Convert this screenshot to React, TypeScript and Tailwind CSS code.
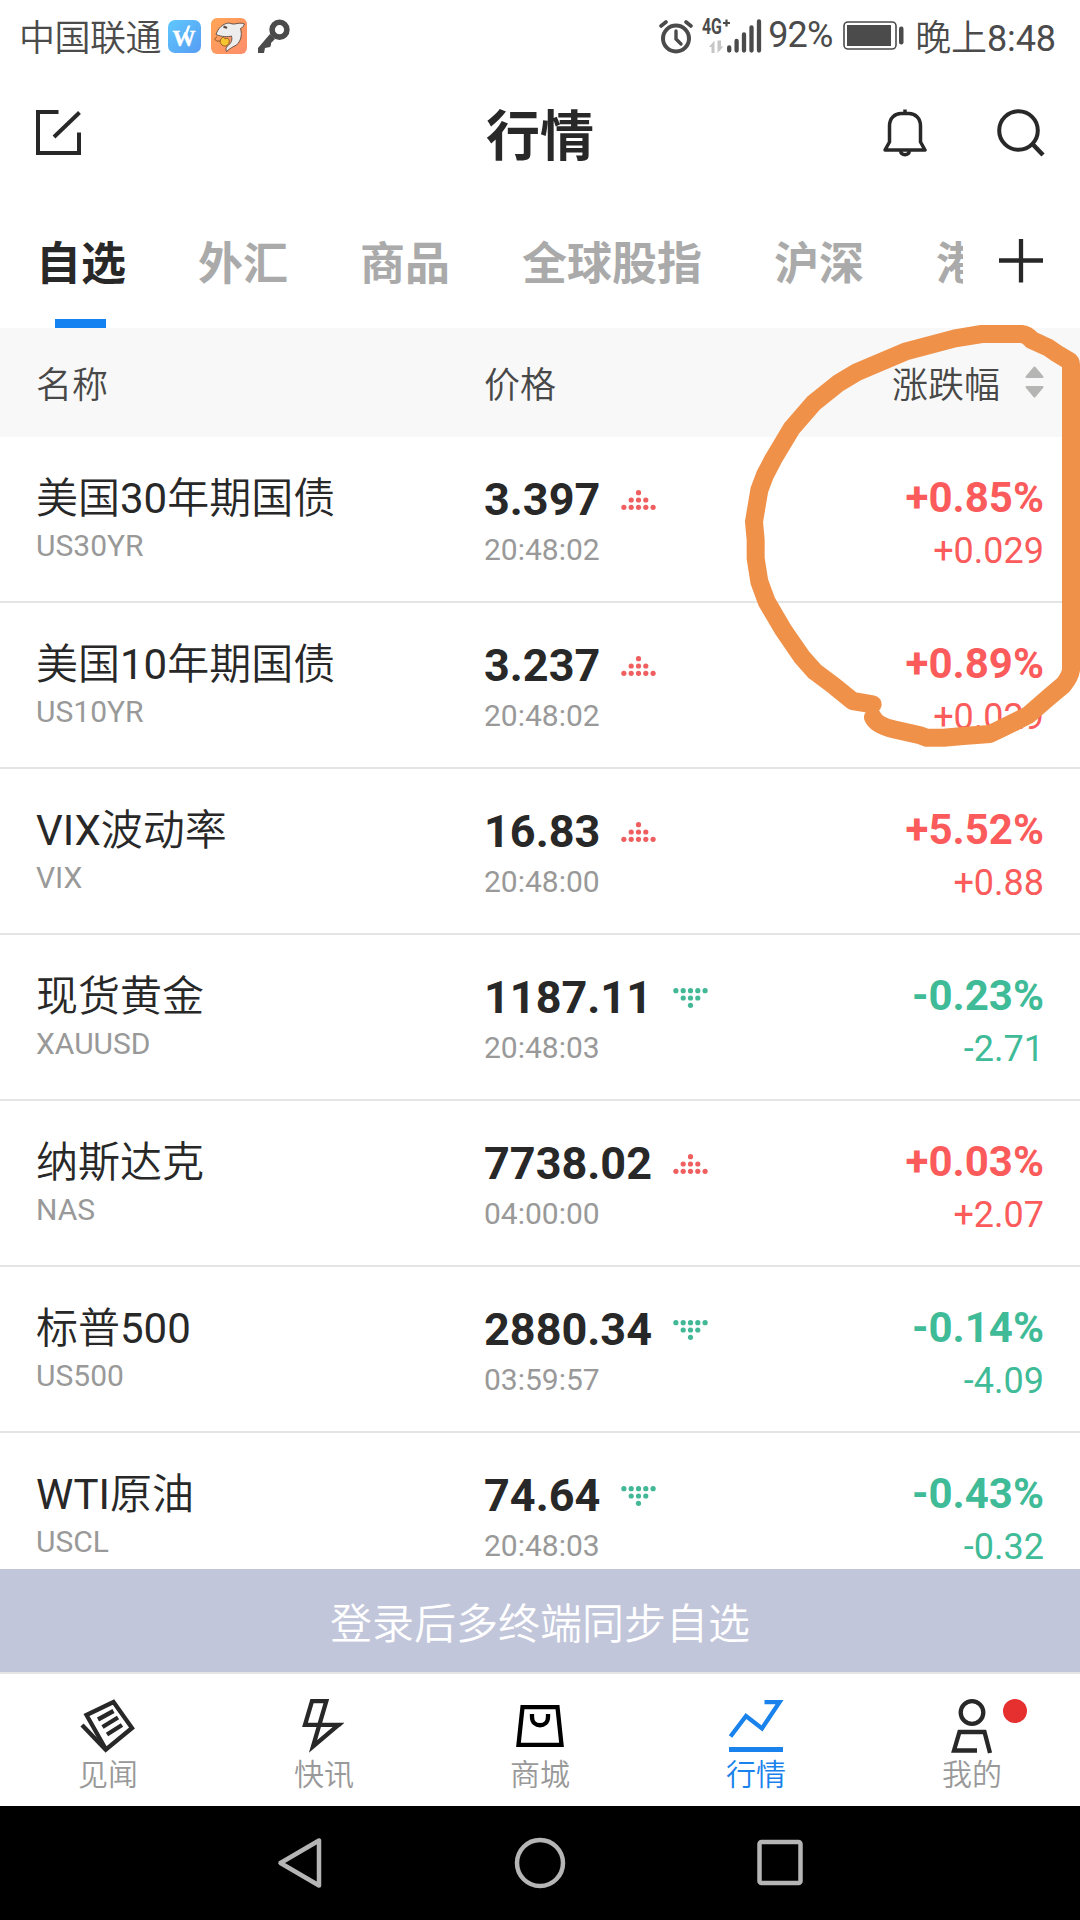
import type { ReactNode } from "react";

interface Quote {
  name: string;
  code: string;
  price: string;
  time: string;
  percent: string;
  change: string;
}

const TABS = ["自选", "外汇", "商品", "全球股指", "沪深", "港股"];

const QUOTES: Quote[] = [
  { name: "美国30年期国债", code: "US30YR", price: "3.397", time: "20:48:02", percent: "+0.85%", change: "+0.029" },
  { name: "美国10年期国债", code: "US10YR", price: "3.237", time: "20:48:02", percent: "+0.89%", change: "+0.029" },
  { name: "VIX波动率", code: "VIX", price: "16.83", time: "20:48:00", percent: "+5.52%", change: "+0.88" },
  { name: "现货黄金", code: "XAUUSD", price: "1187.11", time: "20:48:03", percent: "-0.23%", change: "-2.71" },
  { name: "纳斯达克", code: "NAS", price: "7738.02", time: "04:00:00", percent: "+0.03%", change: "+2.07" },
  { name: "标普500", code: "US500", price: "2880.34", time: "03:59:57", percent: "-0.14%", change: "-4.09" },
  { name: "WTI原油", code: "USCL", price: "74.64", time: "20:48:03", percent: "-0.43%", change: "-0.32" },
];

// [x, y] of each dot, pointing up
const TREND_DOTS = [
  [17.5, 2.7],
  [10.2, 10],
  [17.5, 10],
  [24.8, 10],
  [2.9, 17.3],
  [10.2, 17.3],
  [17.5, 17.3],
  [24.8, 17.3],
  [32.1, 17.3],
];

// Chinese runs are set a little lighter than the Latin ones beside them
function MixedText({ text }: { text: string }) {
  return text.split(/([\u4e00-\u9fff]+)/).map((part, i) =>
    i % 2 === 1 ? (
      <span key={i} className="font-[350]">
        {part}
      </span>
    ) : (
      part
    ),
  );
}

function TrendDots({ up }: { up: boolean }) {
  return (
    <svg width="35" height="20" viewBox="0 0 35 20" className={up ? "text-[#f05f5f]" : "-scale-y-100 text-[#43b896]"}>
      {TREND_DOTS.map(([x, y]) => (
        <circle key={`${x}-${y}`} cx={x} cy={y} r="2.6" fill="currentColor" />
      ))}
    </svg>
  );
}

function StatusBar() {
  return (
    <div className="flex h-[72px] items-start text-[36px] leading-[42px] text-[#4b4b4b]">
      <span className="ml-[19px] mt-[18px] w-[149px] tracking-[-0.5px] font-[350]">中国联通</span>
      <svg className="mt-[20px]" width="33" height="33" viewBox="0 0 33 33">
        <defs>
          <linearGradient id="wBg" x1="0" y1="0" x2="1" y2="1">
            <stop offset="0" stopColor="#5fc8fd" />
            <stop offset="1" stopColor="#569cf3" />
          </linearGradient>
        </defs>
        <rect width="33" height="33" rx="7" fill="url(#wBg)" />
        <text
          x="16"
          y="26"
          textAnchor="middle"
          fill="#fff"
          stroke="#fff"
          strokeWidth="0.4"
          className="font-['Liberation_Serif',serif] text-[23px] font-bold"
        >
          W
        </text>
        <path d="M17 13l3-7.500h2.500L19 15z" fill="#fff" />
      </svg>
      <svg className="ml-[10px] mt-[18px]" width="36" height="36" viewBox="0 0 36 36">
        <defs>
          <linearGradient id="sharkBg" x1="0" y1="0" x2="1" y2="1">
            <stop offset="0" stopColor="#ffa556" />
            <stop offset="1" stopColor="#fd8d6c" />
          </linearGradient>
        </defs>
        <rect width="36" height="36" rx="6" fill="url(#sharkBg)" />
        <path
          d="M5 16.500C7 10 12 5.500 18 5c3 1 5 1.500 8 .5 3-.5 5-.5 7.500.5-1 2-2 4-4 4.500 2 7 0 13-4 16.500-4 2-6 3-10 6.500-1-2-.5-4 1-5.500 4-3 5-6 4-10-3 1-10 1-15.500-1.500z"
          fill="#ededed"
          stroke="#5a4a42"
          strokeWidth="0.9"
        />
        <path d="M9.500 22c2-4 4-3 4.500-1 3-2 5 1 4 4s-5 4-7 2-2-3-1.500-5z" fill="#f6c530" stroke="#8a5a28" strokeWidth="0.9" />
        <path d="M9 23c-5 1-7-3-3-4" fill="none" stroke="#8a5a28" strokeWidth="1" />
        <path d="M12.500 8.500l3.500 1.500" stroke="#5a4a42" strokeWidth="2.400" />
      </svg>
      <svg className="ml-[11px] mt-[19px]" width="32" height="35" viewBox="0 0 32 35">
        <circle cx="21.500" cy="10.700" r="7.400" fill="none" stroke="currentColor" strokeWidth="5.600" />
        <path d="M12 15l5 5-4 4v2l-1 2-5 1-1 5H0v-5z" fill="currentColor" />
      </svg>

      <div className="ml-auto flex items-start">
        <svg className="mt-[19px]" width="34" height="35" viewBox="0 0 34 35">
          <circle cx="17" cy="19.500" r="13" fill="none" stroke="currentColor" strokeWidth="4" />
          <path d="M17 12v8l5 5" fill="none" stroke="currentColor" strokeWidth="3.400" strokeLinecap="round" />
          <path d="M2 7l5-4M32 7l-5-4" stroke="currentColor" strokeWidth="3.600" strokeLinecap="round" />
        </svg>
        <div className="relative ml-[9px] mt-[19px] h-[34px] w-[60px]">
          <span className="absolute left-0 top-[-1px] origin-left scale-x-[0.72] text-[22px] font-bold leading-[18px]">4G</span>
          <svg className="absolute inset-0" width="60" height="34" viewBox="0 0 60 34">
            <path d="M21 4h7M24.500 .5v7" stroke="currentColor" strokeWidth="2.200" />
            <path d="M12.500 34V21.500L7 28h2.500v6zM15.500 21.500V34l6-6.500h-2.500v-6z" fill="#c6c6c6" />
            <path
              d="M27.200 28.500v3M34.600 22v9.500M42 15.500v16M49.500 8.500v23M57 2.500v29"
              stroke="currentColor"
              strokeWidth="4.300"
              strokeLinecap="round"
            />
          </svg>
        </div>
        <span className="ml-[6px] mt-[14px] w-[75px] tracking-[-0.8px]">92%</span>
        <svg className="mt-[21px]" width="61" height="30" viewBox="0 0 61 30">
          <rect x="1" y="1" width="52" height="27" rx="4" fill="none" stroke="currentColor" strokeWidth="1.600" />
          <rect x="4" y="4" width="44" height="21" fill="currentColor" />
          <rect x="56" y="5.500" width="4.500" height="18" rx="2.200" fill="currentColor" />
        </svg>
        <span className="ml-[11px] mr-[24px] mt-[18px] tracking-[-0.1px]">
          <MixedText text="晚上8:48" />
        </span>
      </div>
    </div>
  );
}

function TitleBar() {
  return (
    <header className="grid h-[122px] grid-cols-[1fr_auto_1fr] items-center px-9 text-[#282828]">
      <svg width="46" height="46" viewBox="0 0 46 46" fill="none" stroke="currentColor" strokeWidth="4">
        <path d="M22.500 2H2v41h41V22.500" />
        <path d="M18 27L43.500 2.500" />
      </svg>
      <h1 className="pt-[9px] text-[54px] font-bold leading-[60px]">行情</h1>
      <div className="flex justify-end">
        <svg width="44" height="48" viewBox="0 0 44 48" fill="none" stroke="currentColor" strokeWidth="3.500">
          <path d="M22 .5V4" />
          <path d="M6.500 33V17C6.500 9 12 4.500 18 4.500h8C32 4.500 37.500 9 37.500 17v16l4.500 8H2z" strokeLinejoin="round" />
          <path d="M17.500 42c1 5 8 5 9 0" />
        </svg>
        <svg className="-mr-px ml-[70px]" width="48" height="48" viewBox="0 0 48 48" fill="none" stroke="currentColor" strokeWidth="4">
          <circle cx="21.500" cy="21.500" r="19.300" />
          <path d="M35 34.500l11 11.500" strokeWidth="4.500" />
        </svg>
      </div>
    </header>
  );
}

function TabBar() {
  return (
    <div className="flex h-[134px] justify-between">
      <div className="flex w-[963px] gap-[72px] overflow-hidden whitespace-nowrap pl-9">
        {TABS.map((tab, i) => (
          <div
            key={tab}
            className={`flex shrink-0 flex-col items-center justify-between text-[45px] font-bold leading-[52px] ${
              i === 0 ? "text-[#282828]" : "text-[#aaaaaa]"
            }`}
          >
            <span className="mt-[45px]">{tab}</span>
            {i === 0 && <span className="mr-px h-[9px] w-[51px] bg-[#1482f0]" />}
          </div>
        ))}
      </div>
      <svg className="mr-[37px] mt-[45px] text-[#282828]" width="44" height="44" viewBox="0 0 44 44">
        <path d="M0 21.500h44M22 0v43.500" stroke="currentColor" strokeWidth="4.300" />
      </svg>
    </div>
  );
}

function ColumnHeader() {
  return (
    <div className="flex h-[109px] items-center bg-[#f8f8f8] px-9 text-[36px] leading-[44px] text-[#484848]">
      <span className="w-[448px] pt-[7px] font-[350]">名称</span>
      <span className="pt-[7px] font-[350]">价格</span>
      <span className="ml-auto pt-[7px] font-[350]">涨跌幅</span>
      <svg className="-mt-px ml-[25px]" width="19" height="32" viewBox="0 0 19 32">
        <path
          d="M9.500 1.500L17.500 11H1.500zM9.500 30.500L17.500 21H1.500z"
          fill="#b5b5b3"
          stroke="#b5b5b3"
          strokeWidth="2"
          strokeLinejoin="round"
        />
      </svg>
    </div>
  );
}

function QuoteRow({ quote }: { quote: Quote }) {
  const up = quote.percent.startsWith("+");
  return (
    <div className="flex h-[166px] shrink-0 border-b-2 border-[#e5e5e5] px-9">
      <div className="w-[448px] pt-[38px]">
        <p className="text-[42px] leading-[48px] text-[#282828]">
          <MixedText text={quote.name} />
        </p>
        <p className="mt-[5px] text-[30px] leading-[36px] text-[#999999]">{quote.code}</p>
      </div>
      <div className="pt-[39px]">
        <div className="flex items-center gap-[21px]">
          <p className="text-[45px] font-bold leading-[48px] text-[#282828]">{quote.price}</p>
          <TrendDots up={up} />
        </div>
        <p className="mt-2 text-[30px] leading-[36px] text-[#999999]">{quote.time}</p>
      </div>
      <div className={`ml-auto pt-[37px] text-right ${up ? "text-[#fb5b5b]" : "text-[#3fbb97]"}`}>
        <p className="text-[42px] font-bold leading-[48px]">{quote.percent}</p>
        <p className="mt-2 text-[36px] leading-[42px]">{quote.change}</p>
      </div>
    </div>
  );
}

function NavItem({ label, active, children }: { label: string; active?: boolean; children: ReactNode }) {
  return (
    <div className="flex w-[216px] flex-col items-center pt-[24px]">
      <svg
        width="60"
        height="56"
        viewBox="0 0 60 56"
        fill="none"
        stroke="currentColor"
        strokeWidth="4.300"
        className={active ? "text-[#1a82ec]" : "text-[#282828]"}
      >
        {children}
      </svg>
      <span className={`mt-[2px] text-[30px] font-[350] leading-[38px] ${active ? "text-[#1a82ec]" : "text-[#999999]"}`}>
        {label}
      </span>
    </div>
  );
}

function BottomNav() {
  return (
    <nav className="flex h-[134px] border-t-2 border-[#e5e5e5] bg-white">
      <NavItem label="见闻">
        <path d="M35.500 4L54 30 28 51.500 8.500 17z" />
        <path d="M4 27l24 25" />
        <path d="M20 21.500L35.500 13M24.500 29L40 19.500M29 36.500L44 27" />
      </NavItem>
      <NavItem label="快讯">
        <path d="M32.300 3.200H18l-7 23.600h33.500L19 48.500z" strokeMiterlimit="10" />
        <path d="M44 26.800l6-2.100-4 4z" fill="currentColor" stroke="none" />
      </NavItem>
      <NavItem label="商城">
        <g className="text-black" stroke="currentColor">
          <path d="M12.500 9.200h35l4 37.600h-43z" />
          <path d="M22 16v3c0 11 16 11 16 0v-3" />
        </g>
      </NavItem>
      <NavItem label="行情" active>
        <path d="M4.500 38.500L20 18l16 12.500L53.500 4.200H38.500" />
        <path d="M3 51.500h54" strokeWidth="5" />
      </NavItem>
      <div className="relative">
        <NavItem label="我的">
          <circle cx="30" cy="14.500" r="11.300" />
          <path d="M35 52.500H12l5.500-18.500h25l5.500 21" />
        </NavItem>
        <span className="absolute left-[139px] top-[25px] size-6 rounded-full bg-[#e62f2f]" />
      </div>
    </nav>
  );
}

function SystemNav() {
  return (
    <div className="flex h-[114px] items-center justify-center gap-[180px] bg-black text-[#b5b5b5]">
      {[
        <path key="back" d="M10.500 28L49 5.500V50.500z" strokeLinejoin="round" />,
        <circle key="home" cx="30" cy="28" r="23" />,
        <rect key="recent" x="9.500" y="7" width="41" height="41" rx="2" />,
      ].map((shape) => (
        <svg key={shape.key} width="60" height="56" viewBox="0 0 60 56" fill="none" stroke="currentColor" strokeWidth="4.500">
          {shape}
        </svg>
      ))}
    </div>
  );
}

function MarkerCircle() {
  return (
    <svg className="pointer-events-none absolute left-[720px] top-[310px]" width="360" height="450" viewBox="0 0 1080 1350">
      <path
        d="M458 1183L398 1173 345 1130 285 1085 245 1040 190 960 140 875 118 815 107 745 107 690 102 635 118 540 135 495 160 447 215 355 280 280 355 220 410 187 555 125 705 85 785 72 905 72 Q922 74 935 90L985 113 1010 130 1048 153Q1053 156 1053 165L1053 1080Q1050 1100 1030 1125L985 1163 925 1215 870 1243 810 1272 730 1278 670 1283 620 1283 600 1276 520 1258 Q468 1245 459 1222"
        fill="none"
        stroke="#f0914a"
        strokeWidth="54"
        strokeLinecap="round"
        strokeLinejoin="round"
      />
    </svg>
  );
}

export default function App() {
  return (
    <div className="relative flex h-[1920px] w-[1080px] flex-col overflow-hidden bg-white font-['Roboto','Noto_Sans_CJK_SC',sans-serif]">
      <StatusBar />
      <TitleBar />
      <TabBar />
      <ColumnHeader />
      <main className="flex h-[1132px] flex-col overflow-hidden">
        {QUOTES.map((quote) => (
          <QuoteRow key={quote.code} quote={quote} />
        ))}
      </main>
      <div className="flex h-[103px] items-center justify-center bg-[#c2c6da] pt-2 text-[42px] font-[350] leading-[50px] text-white">
        登录后多终端同步自选
      </div>
      <BottomNav />
      <SystemNav />
      <MarkerCircle />
    </div>
  );
}
